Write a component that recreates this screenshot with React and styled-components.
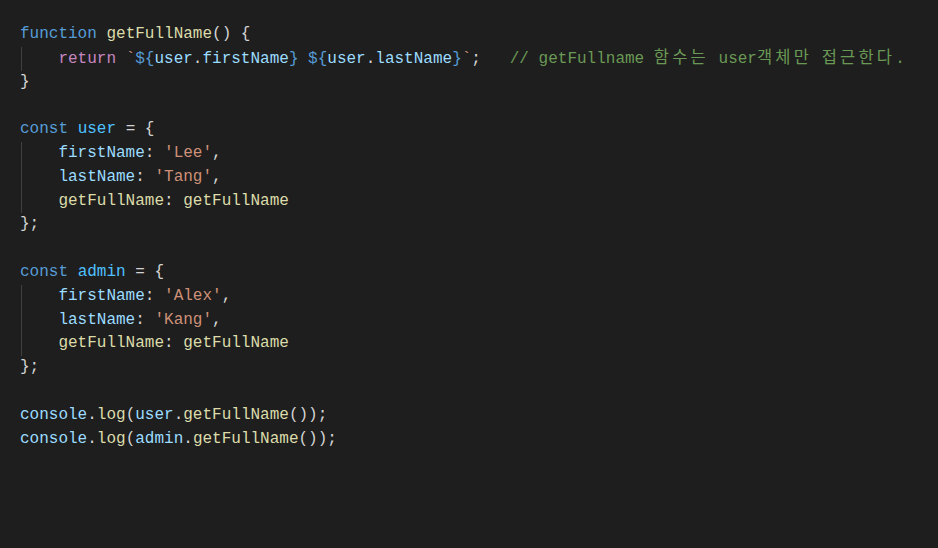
import React from 'react';
import styled, {createGlobalStyle} from 'styled-components';

const GlobalStyle = createGlobalStyle`
  html, body {
    margin: 0;
    padding: 0;
    background: #1e1e1e;
  }
`;

const Editor = styled.div`
  box-sizing: border-box;
  width: 938px;
  height: 548px;
  padding: 23px 0 0 20px;
  background: #1e1e1e;
  color: #d4d4d4;
  font-family: "Liberation Mono", "Noto Sans CJK KR", monospace;
  font-size: 16px;
  line-height: 23.8px;
  overflow: hidden;
`;

const Line = styled.div`
  height: 23.8px;
  white-space: pre;
`;

const Block = styled.div`
  margin-left: 1px;
  padding-left: calc(4ch - 2px);
  border-left: 1px solid #404040;
`;

const colors = {
  keyword: '#569cd6',
  control: '#c586c0',
  fn: '#dcdcaa',
  variable: '#9cdcfe',
  constant: '#4fc1ff',
  string: '#ce9178',
  comment: '#6a9955',
  punct: '#d4d4d4',
};

const Token = styled.span`
  color: ${props => colors[props.$kind] || colors.punct};
`;

const Hangul = styled.span`
  font-size: 16.5px;
  letter-spacing: 3.2px;
`;

const K = ({children}) => <Token $kind="keyword">{children}</Token>;
const F = ({children}) => <Token $kind="fn">{children}</Token>;
const V = ({children}) => <Token $kind="variable">{children}</Token>;
const C = ({children}) => <Token $kind="constant">{children}</Token>;
const S = ({children}) => <Token $kind="string">{children}</Token>;

const UserObject = ({name, first, last}) => (
  <>
    <Line><K>const</K> <C>{name}</C> = {'{'}</Line>
    <Block>
      <Line><V>firstName</V>: <S>'{first}'</S>,</Line>
      <Line><V>lastName</V>: <S>'{last}'</S>,</Line>
      <Line><F>getFullName</F>: <F>getFullName</F></Line>
    </Block>
    <Line>{'};'}</Line>
  </>
);

export default function App() {
  return (
    <>
      <GlobalStyle />
      <Editor>
        <Line><K>function</K> <F>getFullName</F>() {'{'}</Line>
        <Block>
          <Line>
            <Token $kind="control">return</Token>{' '}
            <S>`</S><K>{'${'}</K><V>user</V>.<V>firstName</V><K>{'}'}</K>
            <S> </S>
            <K>{'${'}</K><V>user</V>.<V>lastName</V><K>{'}'}</K><S>`</S>;
            {'   '}
            <Token $kind="comment">
              // getFullname <Hangul>함수는</Hangul> user<Hangul>객체만</Hangul> <Hangul>접근한다</Hangul>.
            </Token>
          </Line>
        </Block>
        <Line>{'}'}</Line>
        <Line> </Line>
        <UserObject name="user" first="Lee" last="Tang" />
        <Line> </Line>
        <UserObject name="admin" first="Alex" last="Kang" />
        <Line> </Line>
        <Line><V>console</V>.<F>log</F>(<V>user</V>.<F>getFullName</F>());</Line>
        <Line><V>console</V>.<F>log</F>(<V>admin</V>.<F>getFullName</F>());</Line>
      </Editor>
    </>
  );
}
